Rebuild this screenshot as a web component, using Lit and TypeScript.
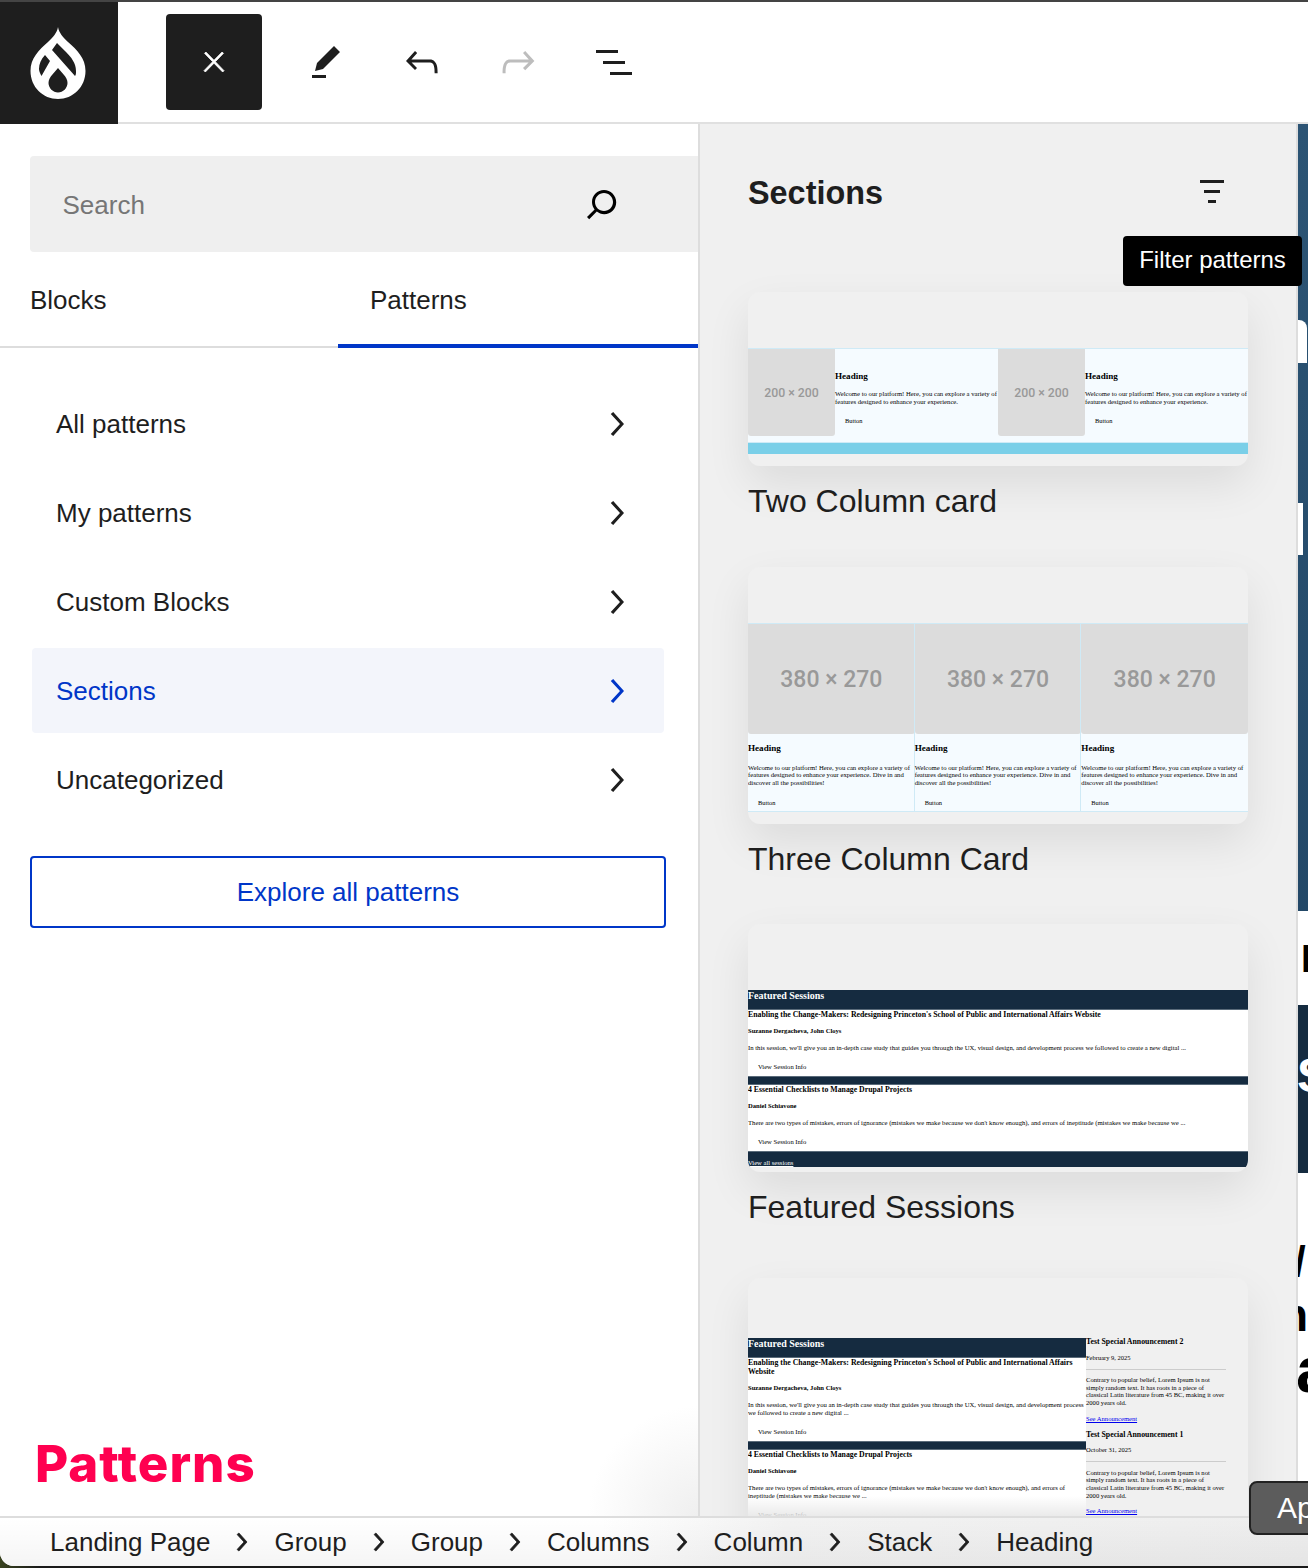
import { css, html, LitElement } from "lit";
import { customElement } from "lit/decorators.js";

const icon = (d: string, cls = "") => html`<svg class="icon ${cls}" viewBox="0 0 24 24"><path d="${d}"></path></svg>`;

const CHEVRON = "M10.6 6L9.4 7l4.6 5-4.6 5 1.2 1 5.4-6z";
const CLOSE = "M13 11.8l6.1-6.3-1-1-6.1 6.2-6.1-6.2-1 1 6.1 6.3-6.5 6.7 1 1 6.5-6.6 6.5 6.6 1-1z";
const EDIT = "m19 7-3-3-8.5 8.5-1 4 4-1L19 7Zm-7 11.5H5V20h7v-1.5Z";
const UNDO = "M18.3 11.7c-.6-.6-1.4-.9-2.3-.9H6.7l2.9-3.3-1.1-1-4.5 5L8.5 16l1-1-2.7-2.7H16c.5 0 .9.2 1.3.5 1 1 1 3.4 1 4.5v.3h1.5v-.2c0-1.5 0-4.3-1.5-5.7z";
const REDO = "M15.6 6.5l-1.1 1 2.9 3.3H8c-.9 0-1.7.3-2.3.9-1.4 1.5-1.4 4.2-1.4 5.7v.2h1.5v-.3c0-1.1 0-3.5 1-4.5.3-.3.7-.5 1.3-.5h9.2L14.5 15l1.1 1.1 4.6-4.6-4.6-5z";
const LIST = "M3 6h11v1.5H3V6Zm3.5 5.5h11V13h-11v-1.5ZM21 17H10v1.5h11V17Z";
const SEARCH = "M13 5c-3.3 0-6 2.7-6 6 0 1.4.5 2.7 1.3 3.7l-3.8 3.8 1.1 1.1 3.8-3.8c1 .8 2.3 1.3 3.7 1.3 3.3 0 6-2.7 6-6S16.3 5 13 5zm0 10.5c-2.5 0-4.5-2-4.5-4.5s2-4.5 4.5-4.5 4.5 2 4.5 4.5-2 4.5-4.5 4.5z";
const FILTER = "M10 17.5H14V16H10V17.5ZM6 6V7.5H18V6H6ZM8 12.5H16V11H8V12.5Z";

const DRUPAL =
    "M58 27C59 33 63 37 68 42C77 50 85.5 58 85.5 71C85.5 87 73 99 58 99C43 99 30.5 87 30.5 71C30.5 58 39 50 48 42C53 37 57 33 58 27Z" +
    "M52 50L57 43L66 52C71 57 76 63 76 71C76 73 76 75 75 76Z" +
    "M45 55L50 61L41.5 76C40 73 39 71 39 69C39 64 41 59 45 55Z" +
    "M58 68L64 75C66 77 67.5 80 67.5 83C67.5 88 63 92.5 58 92.5C53 92.5 48.5 88 48.5 83C48.5 80 50 77 52 75Z";

const NAV = ["All patterns", "My patterns", "Custom Blocks", "Sections", "Uncategorized"];
const CRUMBS = ["Landing Page", "Group", "Group", "Columns", "Column", "Stack", "Heading"];

const WELCOME_SHORT = "Welcome to our platform! Here, you can explore a variety of features designed to enhance your experience.";
const WELCOME_LONG = WELCOME_SHORT + " Dive in and discover all the possibilities!";
const SESSION_A = "In this session, we'll give you an in-depth case study that guides you through the UX, visual design, and development process we followed to create a new digital ...";
const SESSION_B = "There are two types of mistakes, errors of ignorance (mistakes we make because we don't know enough), and errors of ineptitude (mistakes we make because we ...";
const ANNOUNCE = "Contrary to popular belief, Lorem Ipsum is not simply random text. It has roots in a piece of classical Latin literature from 45 BC, making it over 2000 years old.";

// slices of the page that shows behind the panel, top to bottom
const CANVAS = [
    { h: 196, kind: "clear", glyphs: [] },
    { h: 43, kind: "white patch-a", glyphs: [] },
    { h: 140, kind: "clear", glyphs: [] },
    { h: 52, kind: "white patch-b", glyphs: [] },
    { h: 356, kind: "clear", glyphs: [] },
    { h: 94, kind: "white", glyphs: [{ t: "D", top: 29, left: 3, size: 38 }] },
    { h: 168, kind: "navy", glyphs: [{ t: "S", top: 47, left: -1, size: 48 }] },
    {
        h: 343,
        kind: "white",
        glyphs: [
            { t: "/", top: 68, left: -4, size: 42 },
            { t: "n", top: 9, left: -18, size: 46 },
            { t: "a", top: 0, left: -2, size: 64 },
        ],
    },
];

@customElement("app-root")
export class AppRoot extends LitElement {
    renderTwoCol(label: string) {
        return html`
            <div class="col two">
                <div class="ph small">${label}</div>
                <div class="two-text">
                    <div class="pv-h">Heading</div>
                    <div class="pv-p">${WELCOME_SHORT}</div>
                    <div class="pv-b">Button</div>
                </div>
            </div>`;
    }

    renderThreeCol() {
        return html`
            <div class="col three">
                <div class="ph big">380 × 270</div>
                <div class="pv-h">Heading</div>
                <div class="pv-p">${WELCOME_LONG}</div>
                <div class="pv-b">Button</div>
            </div>`;
    }

    renderSession(title: string, who: string, text: string) {
        return html`
            <div class="session">
                <div class="s-title">${title}</div>
                <div class="s-who">${who}</div>
                <div class="s-text">${text}</div>
                <div class="pv-b s-btn">View Session Info</div>
            </div>`;
    }

    renderSessions() {
        return html`
            <div class="sessions">
                <div class="s-head">Featured Sessions</div>
                ${this.renderSession("Enabling the Change-Makers: Redesigning Princeton's School of Public and International Affairs Website", "Suzanne Dergacheva, John Cloys", SESSION_A)}
                <div class="s-bar"></div>
                ${this.renderSession("4 Essential Checklists to Manage Drupal Projects", "Daniel Schiavone", SESSION_B)}
            </div>`;
    }

    renderAnnouncement(title: string, date: string) {
        return html`
            <div class="ann">
                <div class="a-title">${title}</div>
                <div class="a-date">${date}</div>
                <div class="a-rule"></div>
                <div class="a-text">${ANNOUNCE}</div>
                <a class="a-link">See Announcement</a>
            </div>`;
    }

    render() {
        return html`
            <div class="main">
                <header class="toolbar">
                    <div class="logo">
                        <svg viewBox="0 0 118 122"><path fill-rule="evenodd" d="${DRUPAL}"></path></svg>
                    </div>
                    <div class="tools">
                        <div class="close">${icon(CLOSE, "x light")}</div>
                        <div class="btns">
                            ${icon(EDIT)}
                            ${icon(UNDO)}
                            ${icon(REDO, "muted")}
                            ${icon(LIST)}
                        </div>
                    </div>
                </header>

                <div class="body">
                    <aside class="left">
                        <div class="search">
                            <span>Search</span>
                            ${icon(SEARCH)}
                        </div>
                        <div class="tabs">
                            <div class="tab">Blocks</div>
                            <div class="tab active">Patterns</div>
                        </div>
                        <nav class="nav">
                            ${NAV.map(n => html`
                                <div class="row ${n === "Sections" ? "on" : ""}">
                                    <span>${n}</span>${icon(CHEVRON)}
                                </div>`)}
                        </nav>
                        <div class="explore">Explore all patterns</div>
                        <div class="brand">Patterns</div>
                    </aside>

                    <section class="right">
                        <div class="right-head">
                            <h2>Sections</h2>
                            ${icon(FILTER)}
                        </div>
                        <div class="card c1">
                            <div class="cols2">
                                ${this.renderTwoCol("200 × 200")}
                                ${this.renderTwoCol("200 × 200")}
                            </div>
                            <div class="cyan"></div>
                        </div>
                        <div class="title">Two Column card</div>
                        <div class="card c2">
                            <div class="cols3">
                                ${this.renderThreeCol()}
                                ${this.renderThreeCol()}
                                ${this.renderThreeCol()}
                            </div>
                        </div>
                        <div class="title t2">Three Column Card</div>
                        <div class="card c3">
                            ${this.renderSessions()}
                            <div class="s-foot"><a>View all sessions</a></div>
                        </div>
                        <div class="title t3">Featured Sessions</div>
                        <div class="card c4">
                            <div class="split">
                                ${this.renderSessions()}
                                <div class="anns">
                                    ${this.renderAnnouncement("Test Special Announcement 2", "February 9, 2025")}
                                    ${this.renderAnnouncement("Test Special Announcement 1", "October 31, 2025")}
                                </div>
                            </div>
                            <div class="fade"></div>
                        </div>
                    </section>

                    <div class="canvas">
                        ${CANVAS.map(seg => html`
                            <div class="seg ${seg.kind}" style="height:${seg.h}px">
                                ${seg.glyphs.map(g => html`
                                    <div class="glyph" style="margin-top:${g.top}px;margin-left:${g.left}px;font-size:${g.size}px">${g.t}</div>`)}
                            </div>`)}
                    </div>
                </div>

                <footer class="crumbs">
                    ${CRUMBS.map((c, i) => html`
                        <span>${c}</span>
                        ${i < CRUMBS.length - 1 ? icon(CHEVRON, "s36 sep") : ""}`)}
                </footer>
            </div>

            <div class="tooltip">Filter patterns</div>
            <div class="apply">Apply</div>
        `;
    }

    static styles = css`
        :host {
            display: block;
            position: relative;
            width: 1308px;
            height: 1568px;
            overflow: hidden;
            font-family: "Liberation Sans", Arial, sans-serif;
            color: #1e1e1e;
            background: linear-gradient(to right, #39431f 0, #1a1a1a 40px);
        }

        .main {
            display: flex;
            flex-direction: column;
            height: 1566px;
            border-top: 2px solid #444;
            box-sizing: border-box;
            border-bottom-left-radius: 14px;
            overflow: hidden;
            background: #fff;
        }

        .icon {
            width: 48px;
            height: 48px;
            flex: none;
            fill: currentColor;
        }

        .icon.s36 {
            width: 36px;
            height: 36px;
        }

        .icon.x {
            width: 32px;
            height: 32px;
        }

        .icon.light {
            color: #fff;
            stroke: #fff;
            stroke-width: 0.6;
        }

        .icon.muted {
            color: #bdbdbd;
        }

        .icon.sep {
            stroke: currentColor;
            stroke-width: 0.5;
            transform: translateX(-1px);
        }

        /* top bar */
        .toolbar {
            display: flex;
            height: 122px;
            flex: none;
        }

        .logo {
            width: 118px;
            background: #1e1e1e;
        }

        .logo svg {
            display: block;
            width: 118px;
            height: 122px;
            fill: #fff;
            transform: translateY(-2px);
        }

        .tools {
            flex: 1;
            display: flex;
            align-items: center;
            padding-left: 48px;
            border-bottom: 2px solid #e0e0e0;
        }

        .close {
            width: 96px;
            height: 96px;
            border-radius: 4px;
            background: #1e1e1e;
            display: flex;
            align-items: center;
            justify-content: center;
        }

        .btns {
            display: flex;
            gap: 48px;
            margin-left: 40px;
        }

        .body {
            display: flex;
            height: 1392px;
            flex: none;
        }

        /* inserter panel */
        .left {
            width: 698px;
            flex: none;
            display: flex;
            flex-direction: column;
            border-right: 2px solid #ddd;
            background: radial-gradient(circle 110px at 100% 100%, #efefef, #fff);
        }

        .search {
            margin: 32px 0 0 30px;
            height: 96px;
            flex: none;
            background: #efefef;
            border-radius: 4px 0 0 4px;
            display: flex;
            align-items: center;
            justify-content: space-between;
            padding: 0 72px 0 33px;
            font-size: 26px;
            color: #767676;
        }

        .search span {
            padding-top: 2px;
            margin-left: -0.5px;
        }

        .search .icon {
            color: #000;
        }

        .tabs {
            display: flex;
            height: 96px;
            flex: none;
            box-sizing: border-box;
            border-bottom: 2px solid #ddd;
            font-size: 26px;
        }

        .tab {
            width: 338px;
            box-sizing: border-box;
            padding-left: 30px;
            display: flex;
            align-items: center;
            padding-top: 2px;
        }

        .tab.active {
            width: 360px;
            padding: 4px 0 0 32px;
            height: 96px;
            border-bottom: 4px solid #0036c8;
        }

        .nav {
            display: flex;
            flex-direction: column;
            gap: 4px;
            margin: 33px 0 0 32px;
            width: 632px;
        }

        .row {
            height: 85px;
            display: flex;
            align-items: center;
            justify-content: space-between;
            padding: 0 24px;
            border-radius: 4px;
            font-size: 26px;
        }

        .row span {
            padding-top: 2px;
        }

        .row.on {
            background: #f3f5fb;
            color: #0036c8;
        }

        .explore {
            margin: 34px 0 0 30px;
            width: 636px;
            height: 72px;
            box-sizing: border-box;
            border: 2px solid #0036c8;
            border-radius: 4px;
            color: #0036c8;
            font-size: 26px;
            display: flex;
            align-items: center;
            justify-content: center;
        }

        .brand {
            margin: auto 0 22px 35px;
            font-family: Inter, "Noto Sans", sans-serif;
            font-weight: 800;
            font-size: 51px;
            letter-spacing: 1px;
            line-height: 60px;
            color: #ff0050;
        }

        /* pattern list */
        .right {
            width: 596px;
            flex: none;
            box-sizing: border-box;
            padding-left: 48px;
            background: #f0f0f0;
            overflow: hidden;
            position: relative;
        }

        .right-head {
            width: 500px;
            height: 168px;
            display: flex;
            align-items: flex-start;
            justify-content: space-between;
        }

        .right-head h2 {
            margin: 50px 0 0;
            font-size: 32.4px;
            line-height: 38px;
            font-weight: 700;
        }

        .right-head .icon {
            margin: 44px 12px 0 0;
            color: #1e1e1e;
        }

        .card {
            width: 500px;
            box-sizing: border-box;
            border-radius: 12px;
            background: #f0f0f0;
            box-shadow: 0 18px 44px rgba(0, 0, 0, 0.085);
            font-family: "Liberation Serif", "Times New Roman", serif;
            color: #000;
            overflow: hidden;
        }

        .title {
            margin: 16px 0 47px;
            font-size: 32px;
            line-height: 38px;
            position: relative;
        }

        .title.t2 {
            margin-bottom: 46px;
        }

        .title.t3 {
            margin-bottom: 52px;
        }

        .c1 {
            height: 174px;
            padding-top: 56px;
        }

        .c2 {
            height: 257px;
            padding-top: 56px;
        }

        .c3 {
            height: 248px;
            padding-top: 66px;
        }

        .c4 {
            height: 300px;
            padding-top: 60px;
            position: relative;
            border-radius: 12px 12px 0 0;
        }

        .cols2,
        .cols3 {
            display: grid;
            background: #f5fbff;
            border-top: 1px solid #cfeaf6;
            border-bottom: 1px solid #cfeaf6;
            box-sizing: border-box;
        }

        .cols2 {
            grid-template-columns: 1fr 1fr;
            height: 95px;
        }

        .cols3 {
            grid-template-columns: 1fr 1fr 1fr;
            height: 189px;
        }

        .col.two {
            display: flex;
            min-width: 0;
        }

        .col.three {
            min-width: 0;
            border-left: 1px solid #cfeaf6;
            margin-left: -1px;
        }

        .ph {
            background: #dcdcdc;
            color: #999;
            font-family: Roboto, "Liberation Sans", sans-serif;
            font-weight: 500;
            border-radius: 0 0 3px 3px;
            display: flex;
            align-items: center;
            justify-content: center;
        }

        .ph.small {
            width: 87px;
            height: 87px;
            flex: none;
            font-size: 12.3px;
        }

        .ph.big {
            height: 110px;
            font-size: 23px;
            margin-bottom: 10px;
        }

        .two-text {
            padding-top: 23px;
            min-width: 0;
            white-space: normal;
        }

        .pv-h {
            font-size: 9.1px;
            line-height: 9px;
            font-weight: 700;
        }

        .pv-p {
            margin-top: 9px;
            font-size: 6.68px;
            line-height: 8px;
        }

        .col.three .pv-p {
            margin-top: 10.5px;
            line-height: 7.6px;
        }

        .pv-b {
            margin: 11px 0 0 10px;
            font-size: 6.4px;
            line-height: 8px;
        }

        .col.three .pv-b {
            margin-top: 12.5px;
        }

        .cyan {
            height: 11px;
            background: #7acfe8;
        }

        .sessions {
            background: #fff;
            min-width: 0;
        }

        .s-head {
            height: 19px;
            box-sizing: border-box;
            background: #152b40;
            color: #fff;
            font-size: 10px;
            font-weight: 700;
            line-height: 12px;
        }

        .session {
            border-top: 1px solid #5a6b7a;
            border-bottom: 1px solid #5a6b7a;
        }

        .s-title {
            font-size: 7.8px;
            line-height: 9px;
            font-weight: 700;
        }

        .s-who {
            margin-top: 8px;
            font-size: 6.6px;
            line-height: 8px;
            font-weight: 700;
        }

        .s-text {
            margin-top: 9px;
            font-size: 6.69px;
            line-height: 8px;
        }

        .s-btn {
            margin-top: 11.4px;
            padding-bottom: 4.4px;
            font-size: 6.6px;
        }

        .s-bar {
            height: 7px;
            background: #152b40;
        }

        .s-foot {
            height: 15px;
            background: #152b40;
            color: #fff;
            font-size: 6.6px;
            line-height: 21px;
            overflow: hidden;
        }

        .s-foot a {
            text-decoration: underline;
        }

        .split {
            display: grid;
            grid-template-columns: 338px 1fr;
        }

        .anns {
            padding-right: 21px;
            margin-top: -1px;
        }

        .ann {
            min-width: 0;
        }

        .a-title {
            font-size: 7.8px;
            line-height: 9px;
            font-weight: 700;
        }

        .a-date {
            margin-top: 7.6px;
            font-size: 6.5px;
            line-height: 8px;
        }

        .a-rule {
            margin-top: 7px;
            height: 1px;
            width: 140px;
            background: #ccc;
        }

        .a-text {
            margin-top: 6.6px;
            font-size: 6.6px;
            line-height: 7.6px;
        }

        .a-link {
            display: inline-block;
            margin: 7.4px 0 7px;
            font-size: 6.6px;
            line-height: 8px;
            color: #0000ee;
            text-decoration: underline;
        }

        .fade {
            position: absolute;
            left: 0;
            width: 338px;
            bottom: 62px;
            height: 20px;
            background: linear-gradient(to bottom, rgba(238, 238, 238, 0), rgba(232, 232, 232, 0.9));
        }

        /* sliver of the page behind the panel */
        .canvas {
            flex: 1;
            min-width: 0;
            border-left: 2px solid #ddd;
            background: linear-gradient(to bottom, #2c5474, #1c3f5e);
        }

        .seg {
            overflow: hidden;
        }

        .seg.white {
            background: #fff;
        }

        .seg.navy {
            background: #152b40;
        }

        .seg.patch-a {
            width: 9px;
            border-top-right-radius: 8px;
        }

        .seg.patch-b {
            width: 5px;
        }

        .glyph {
            font-weight: 700;
            line-height: 1;
            white-space: nowrap;
            color: #000;
        }

        .navy .glyph {
            color: #fff;
        }

        /* breadcrumb */
        .crumbs {
            flex: 1;
            display: flex;
            align-items: center;
            gap: 14px;
            padding: 0 0 0 50px;
            border-top: 2px solid #ddd;
            font-size: 26px;
            background:
                linear-gradient(to bottom, rgba(0, 0, 0, 0), rgba(0, 0, 0, 0.04)),
                linear-gradient(to right, #fff 46%, #f2f2f2 60%, #eee 100%);
        }

        .tooltip {
            position: absolute;
            left: 1123px;
            top: 236px;
            width: 179px;
            height: 50px;
            padding-bottom: 2px;
            box-sizing: border-box;
            border-radius: 4px;
            background: #000;
            color: #fff;
            font-size: 24px;
            display: flex;
            align-items: center;
            justify-content: center;
        }

        .apply {
            position: absolute;
            left: 1249px;
            top: 1481px;
            width: 110px;
            height: 54px;
            box-sizing: border-box;
            border: 2px solid #222;
            border-radius: 8px;
            background: #5c5c5c;
            color: #fff;
            font-size: 30px;
            line-height: 50px;
            padding-left: 26px;
        }
    `;
}
